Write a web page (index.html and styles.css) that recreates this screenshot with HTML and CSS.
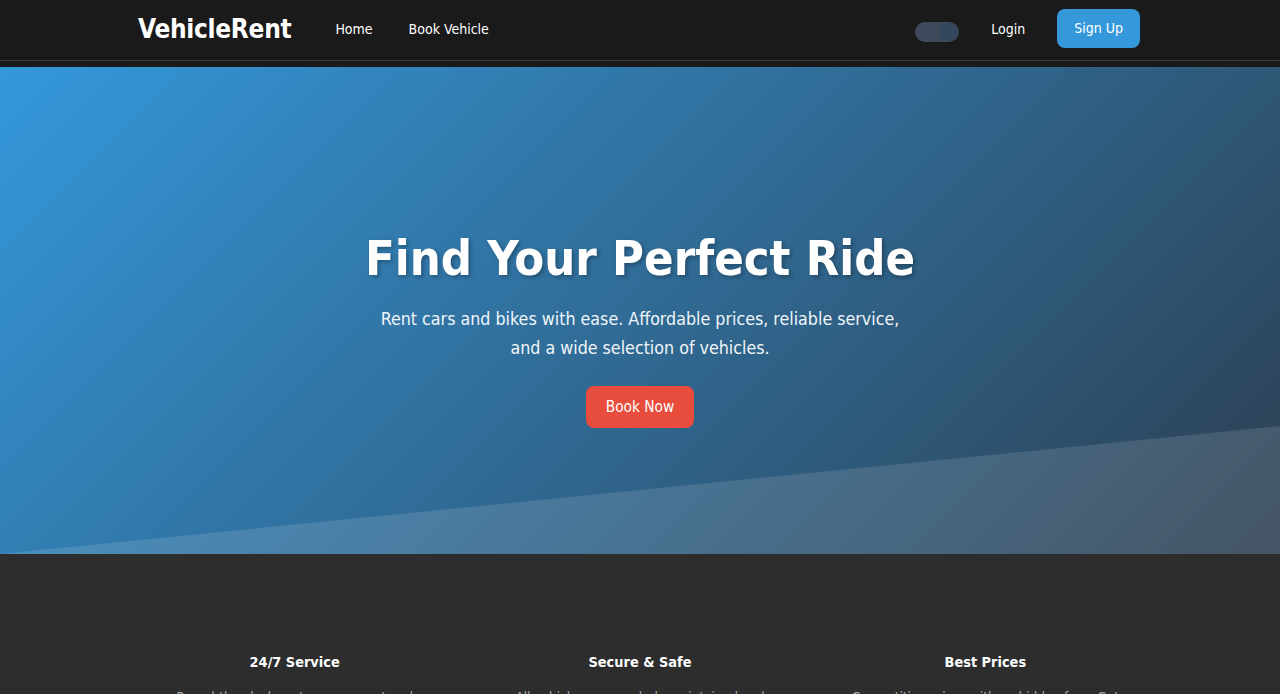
FILE: index.html
```html
<!DOCTYPE html>
<html lang="en">
<head>
<meta charset="utf-8">
<title>VehicleRent</title>
<link rel="stylesheet" href="styles.css">
</head>
<body>
<header class="topbar">
  <div class="container nav">
    <a class="logo" href="#">VehicleRent</a>
    <nav class="links">
      <a href="#">Home</a>
      <a href="#">Book Vehicle</a>
    </nav>
    <div class="actions">
      <span class="toggle"><span class="knob"></span></span>
      <a class="login" href="#">Login</a>
      <a class="signup" href="#">Sign Up</a>
    </div>
  </div>
</header>
<main>
  <section class="hero">
    <div class="hero-content">
      <h1>Find Your Perfect Ride</h1>
      <p>Rent cars and bikes with ease. Affordable prices, reliable service,<br>and a wide selection of vehicles.</p>
      <a class="book" href="#">Book Now</a>
    </div>
  </section>
  <section class="features">
    <div class="container grid">
      <div class="feature">
        <h3>24/7 Service</h3>
        <p>Round-the-clock customer support and roadside assistance wherever you go.</p>
      </div>
      <div class="feature">
        <h3>Secure &amp; Safe</h3>
        <p>All vehicles are regularly maintained and insured for your safety.</p>
      </div>
      <div class="feature">
        <h3>Best Prices</h3>
        <p>Competitive prices with no hidden fees. Get the best value for every ride.</p>
      </div>
    </div>
  </section>
</main>
</body>
</html>
```
FILE: styles.css
```css
* { box-sizing: border-box; }
html, body { margin: 0; padding: 0; }
body {
  background: #1a1a1a;
  color: #fff;
  font-family: "DejaVu Sans Condensed", "DejaVu Sans", sans-serif;
}
a { text-decoration: none; color: inherit; }
.container { width: 1004px; margin: 0 auto; }
.topbar {
  height: 61px;
  border-bottom: 1px solid #3a3a3a;
  background: #1a1a1a;
}
.nav { display: flex; align-items: center; height: 58px; }
.logo { font-size: 26px; font-weight: bold; letter-spacing: -0.3px; }
.links { display: flex; gap: 36px; margin-left: 44px; font-size: 14px; }
.actions { margin-left: auto; margin-right: 2px; display: flex; align-items: center; font-size: 14px; }
.toggle {
  width: 44px; height: 20px; border-radius: 10px;
  background: #3e4a5c; position: relative; display: block;
  margin-right: 32px; margin-top: 5px;
}
.knob {
  position: absolute; right: 1px; top: 1px;
  width: 18px; height: 18px; border-radius: 50%;
  background: #34475e;
}
.login { margin-right: 32px; }
.signup {
  background: #3498db; border-radius: 8px;
  padding: 0 17px; height: 39px; line-height: 39px;
  font-size: 14px;
  margin-top: -1px;
}
.hero {
  margin-top: 6px;
  height: 487px;
  position: relative;
  overflow: hidden;
  background: linear-gradient(135deg, #3498db 0%, #2c3e50 100%);
  display: flex; align-items: center; justify-content: center;
  text-align: center;
}
.hero::after {
  content: "";
  position: absolute; left: 0; right: 0; bottom: 0;
  height: 128px;
  background: rgba(255,255,255,0.12);
  clip-path: polygon(0 100%, 100% 0, 100% 100%);
}
.hero-content { position: relative; z-index: 1; margin-top: 33px; }
.hero h1 {
  margin: 0 0 16px;
  font-size: 48.5px; font-weight: bold;
  text-shadow: 2px 2px 4px rgba(0,0,0,0.3);
  line-height: 62px;
}
.hero p {
  margin: 0 0 23px;
  font-size: 17.7px; line-height: 29px;
  color: #f1f5f9;
}
.book {
  display: inline-block;
  background: #e74c3c; border-radius: 8px;
  height: 42px; line-height: 42px; padding: 0 20px;
  font-size: 15.3px;
}
.features { background: #2d2d2d; padding: 100px 0 40px; }
.grid { display: grid; grid-template-columns: repeat(3, 1fr); gap: 32px; text-align: center; }
.feature { padding: 0 20px; }
.feature h3 { margin: 0 0 17px; font-size: 14.4px; font-weight: bold; }
.feature p { margin: 0; font-size: 13.5px; color: #aaa; line-height: 1.6; }
```
